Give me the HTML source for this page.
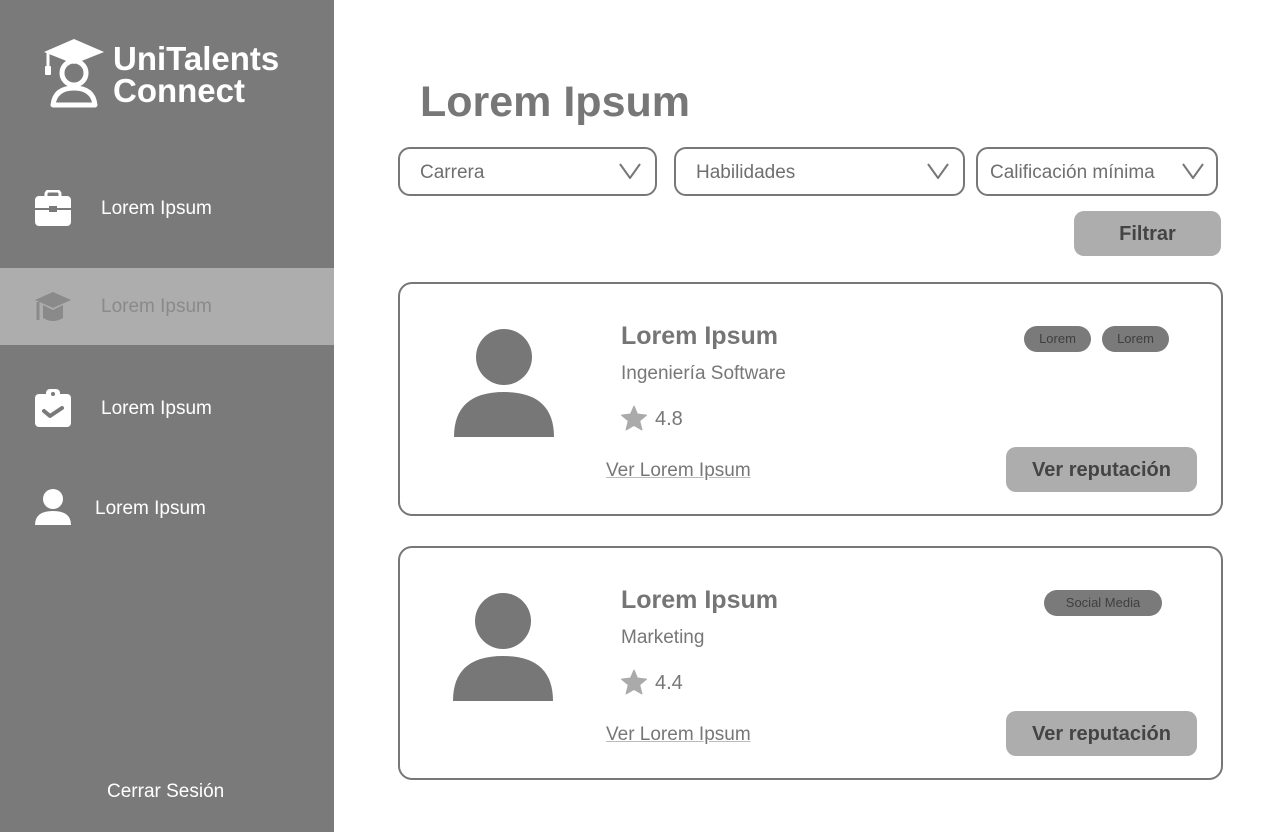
<!DOCTYPE html>
<html><head><meta charset="utf-8"><style>
*{margin:0;padding:0;box-sizing:border-box}
body{width:1280px;height:832px;position:relative;background:#fff;font-family:"Liberation Sans",sans-serif;overflow:hidden}
.side{position:absolute;left:0;top:0;width:334px;height:832px;background:#7a7a7a}
.abs{position:absolute}
.nav{position:absolute;left:0;width:334px;height:77px;color:#fff;font-size:19px}
.nav span{position:absolute;top:28px}
.dd{position:absolute;top:147px;height:49px;border:2px solid #777;border-radius:12px;color:#6f6f6f;font-size:19px}
.dd span{position:absolute;left:20px;top:13px}
.dd svg{position:absolute;right:14px;top:14px}
.card{position:absolute;left:398px;width:825px;height:234px;border:2px solid #777;border-radius:14px}
.name{position:absolute;left:221px;font-size:25px;font-weight:bold;color:#757575}
.sub{position:absolute;left:221px;font-size:19px;color:#777}
.rate{position:absolute;left:255px;font-size:20px;color:#777}
.link{position:absolute;left:206px;font-size:19px;color:#777;text-decoration:underline;text-decoration-color:#bbb}
.btn{position:absolute;background:#adadad;border-radius:10px;color:#444;font-weight:bold;text-align:center}
.tag{position:absolute;background:#7a7a7a;border-radius:13px;color:#3f3f3f;font-size:13px;text-align:center;height:26px;line-height:26px}
</style></head><body>
<div class="side">
 <svg class="abs" style="left:42px;top:38px" width="64" height="70" viewBox="0 0 64 70">
  <path d="M2 14 L32 1 L62 14 L32 26 Z" fill="#fff"/>
  <path d="M6 15 V30" stroke="#fff" stroke-width="3"/><rect x="3" y="28" width="6" height="9" rx="1" fill="#fff"/>
  <circle cx="32" cy="35" r="12" fill="none" stroke="#fff" stroke-width="5"/>
  <path d="M11 67 Q13 50 32 50 Q51 50 53 67 Z" fill="none" stroke="#fff" stroke-width="5" stroke-linejoin="round"/>
 </svg>
 <div class="abs" style="left:113px;top:43px;color:#fff;font-weight:bold;font-size:33px;line-height:32px">UniTalents<br>Connect</div>
 <div class="nav" style="top:170px">
  <svg class="abs" style="left:35px;top:20px" width="36" height="36" viewBox="0 0 36 36"><rect x="11" y="1" width="14" height="8" rx="3" fill="none" stroke="#fff" stroke-width="3"/><rect x="0" y="6" width="36" height="30" rx="4" fill="#fff"/><rect x="0" y="18" width="36" height="2" fill="#7a7a7a"/><rect x="14" y="16" width="8" height="6" fill="#7a7a7a"/></svg>
  <span style="left:101px">Lorem Ipsum</span></div>
 <div class="nav" style="top:268px;background:#adadad;color:#8a8a8a">
  <svg class="abs" style="left:34px;top:22px" width="38" height="36" viewBox="0 0 38 36"><path d="M1 10 L19 2 L37 10 L19 18 Z" fill="#8a8a8a"/><path d="M9 15 V28 Q19 34 29 28 V15 L19 20 Z" fill="#8a8a8a"/><path d="M4 12 V30" stroke="#8a8a8a" stroke-width="3"/></svg>
  <span style="left:101px">Lorem Ipsum</span></div>
 <div class="nav" style="top:370px">
  <svg class="abs" style="left:35px;top:19px" width="36" height="38" viewBox="0 0 36 38"><rect x="0" y="5" width="36" height="33" rx="4" fill="#fff"/><rect x="11" y="0" width="14" height="10" rx="4" fill="#fff"/><circle cx="18" cy="5" r="2" fill="#7a7a7a"/><path d="M9 22 L15 27 L27 19" fill="none" stroke="#7a7a7a" stroke-width="4" stroke-linecap="round" stroke-linejoin="round"/></svg>
  <span style="left:101px">Lorem Ipsum</span></div>
 <div class="nav" style="top:470px">
  <svg class="abs" style="left:35px;top:19px" width="36" height="36" viewBox="0 0 36 36"><circle cx="18" cy="10" r="10" fill="#fff"/><path d="M0 36 Q0 22 18 22 Q36 22 36 36 Z" fill="#fff"/></svg>
  <span style="left:95px">Lorem Ipsum</span></div>
 <div class="abs" style="left:107px;top:781px;color:#fff;font-size:19px">Cerrar Sesión</div>
</div>
<div class="abs" style="left:420px;top:78px;font-size:43px;font-weight:bold;color:#777">Lorem Ipsum</div>
<div class="dd" style="left:398px;width:259px"><span>Carrera</span><svg width="22" height="16"><path d="M1 1 L11 15 L21 1" fill="none" stroke="#777" stroke-width="2"/></svg></div>
<div class="dd" style="left:674px;width:291px"><span>Habilidades</span><svg width="22" height="16"><path d="M1 1 L11 15 L21 1" fill="none" stroke="#777" stroke-width="2"/></svg></div>
<div class="dd" style="left:976px;width:242px"><span style="left:12px">Calificación mínima</span><svg width="22" height="16" style="right:12px"><path d="M1 1 L11 15 L21 1" fill="none" stroke="#777" stroke-width="2"/></svg></div>
<div class="btn" style="left:1074px;top:211px;width:147px;height:45px;line-height:47px;font-size:20px">Filtrar</div>

<div class="card" style="top:282px">
 <svg class="abs" style="left:54px;top:45px" width="100" height="108"><circle cx="50" cy="28" r="28" fill="#777"/><path d="M0 108 Q0 63 50 63 Q100 63 100 108 Z" fill="#777"/></svg>
 <div class="name" style="top:38px">Lorem Ipsum</div>
 <div class="sub" style="top:79px">Ingeniería Software</div>
 <svg class="abs" style="left:220px;top:121px" width="28" height="26" viewBox="0 0 24 23"><path d="M12 1 L15 8 L23 9 L17 14 L19 22 L12 18 L5 22 L7 14 L1 9 L9 8 Z" fill="#aaa" stroke="#aaa" stroke-linejoin="round"/></svg>
 <div class="rate" style="top:124px">4.8</div>
 <div class="link" style="top:176px">Ver Lorem Ipsum</div>
 <div class="tag" style="left:624px;top:42px;width:67px">Lorem</div>
 <div class="tag" style="left:702px;top:42px;width:67px">Lorem</div>
 <div class="btn" style="left:606px;top:163px;width:191px;height:45px;line-height:47px;font-size:20px">Ver reputación</div>
</div>
<div class="card" style="top:546px">
 <svg class="abs" style="left:53px;top:45px" width="100" height="108"><circle cx="50" cy="28" r="28" fill="#777"/><path d="M0 108 Q0 63 50 63 Q100 63 100 108 Z" fill="#777"/></svg>
 <div class="name" style="top:38px">Lorem Ipsum</div>
 <div class="sub" style="top:79px">Marketing</div>
 <svg class="abs" style="left:220px;top:121px" width="28" height="26" viewBox="0 0 24 23"><path d="M12 1 L15 8 L23 9 L17 14 L19 22 L12 18 L5 22 L7 14 L1 9 L9 8 Z" fill="#aaa" stroke="#aaa" stroke-linejoin="round"/></svg>
 <div class="rate" style="top:124px">4.4</div>
 <div class="link" style="top:176px">Ver Lorem Ipsum</div>
 <div class="tag" style="left:644px;top:42px;width:118px">Social Media</div>
 <div class="btn" style="left:606px;top:163px;width:191px;height:45px;line-height:47px;font-size:20px">Ver reputación</div>
</div>
</body></html>
